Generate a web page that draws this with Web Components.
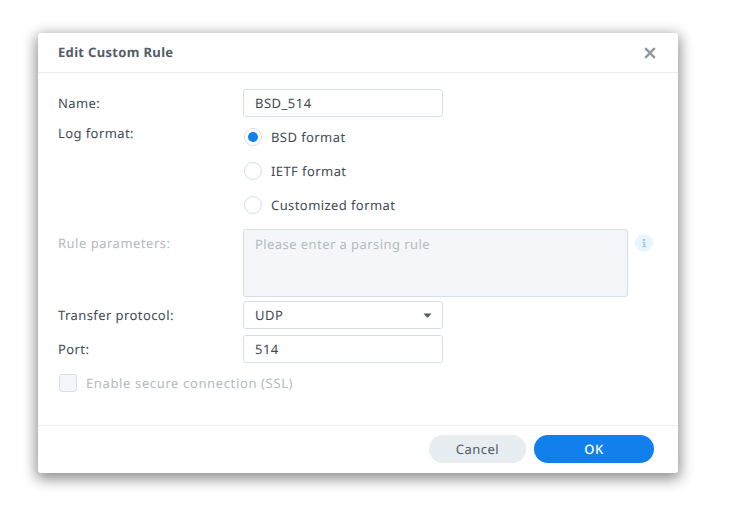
<!DOCTYPE html>
<html>
<head>
<meta charset="utf-8">
<title>Edit Custom Rule</title>
<style>
  html, body { margin: 0; background: #fff; }
  body { width: 748px; height: 531px; overflow: hidden; font-family: "Noto Sans", sans-serif; text-rendering: geometricPrecision; }
</style>
</head>
<body>
<rule-dialog heading="Edit Custom Rule">
  <form-row label="Name:"><text-box value="BSD_514"></text-box></form-row>
  <form-row label="Log format:" class="radios">
    <radio-group>
      <radio-option label="BSD format" checked></radio-option>
      <radio-option label="IETF format"></radio-option>
      <radio-option label="Customized format"></radio-option>
    </radio-group>
  </form-row>
  <form-row label="Rule parameters:" disabled class="area">
    <area-box placeholder="Please enter a parsing rule"></area-box>
  </form-row>
  <form-row label="Transfer protocol:"><select-box value="UDP"></select-box></form-row>
  <form-row label="Port:"><text-box value="514"></text-box></form-row>
  <check-row label="Enable secure connection (SSL)"></check-row>
</rule-dialog>

<script>
(function () {
  const FONT = '"Noto Sans", sans-serif';
  const SPACING = ".5px";

  class RuleDialog extends HTMLElement {
    constructor() {
      super();
      this.attachShadow({ mode: "open" });
      this.shadowRoot.innerHTML = `
        <style>
          :host { display: block; padding: 33px 70px 58px 38px; font-family: ${FONT}; }
          .dialog {
            width: 640px;
            height: 440px;
            background: #fff;
            border-radius: 3px;
            box-shadow: 0 4px 14px 2px rgba(0,0,0,.45);
            display: flex;
            flex-direction: column;
          }
          .head {
            box-sizing: border-box;
            height: 40px;
            flex: none;
            display: flex;
            align-items: center;
            justify-content: space-between;
            padding: 0 22px 0 20px;
            border-bottom: 1px solid #e8edf2;
          }
          .title { font-size: 13px; font-weight: 700; color: #535c66; letter-spacing: .33px; margin-top: -2px; }
          .close { display: block; width: 12px; height: 12px; }
          .body { flex: 1; padding: 16px 20px 0; display: flex; flex-direction: column; }
          .foot {
            box-sizing: border-box;
            height: 48px;
            flex: none;
            border-top: 1px solid #e8edf2;
            display: flex;
            justify-content: flex-end;
            align-items: flex-start;
            gap: 8px;
            padding: 9px 24px 0 0;
          }
          .btn {
            height: 28px;
            border-radius: 14px;
            display: flex;
            align-items: center;
            justify-content: center;
            font-size: 13px;
            letter-spacing: ${SPACING};
          }
          .cancel { width: 97px; background: #e8edf2; color: #4f5863; }
          .ok { width: 120px; background: #1180ec; color: #fff; font-weight: 500; }
        </style>
        <div class="dialog">
          <div class="head">
            <div class="title"></div>
            <svg class="close" viewBox="0 0 12 12"><path d="M1.2 1.2L10.8 10.8M10.8 1.2L1.2 10.8" stroke="#8f98a2" stroke-width="2.4" fill="none"/></svg>
          </div>
          <div class="body"><slot></slot></div>
          <div class="foot">
            <div class="btn cancel">Cancel</div>
            <div class="btn ok">OK</div>
          </div>
        </div>
      `;
    }
    connectedCallback() {
      this.shadowRoot.querySelector(".title").textContent = this.getAttribute("heading");
    }
  }

  class FormRow extends HTMLElement {
    constructor() {
      super();
      this.attachShadow({ mode: "open" });
      this.shadowRoot.innerHTML = `
        <style>
          :host { display: grid; grid-template-columns: 185px 1fr; margin-bottom: 6px; }
          :host(.radios) { margin-bottom: 15px; }
          :host(.area) { margin-bottom: 4px; }
          .label { font-size: 13px; letter-spacing: .42px; color: #414b55; line-height: 28px; }
          :host(.radios) .label { line-height: 20px; }
          :host([disabled]) .label { color: #b4bac0; letter-spacing: ${SPACING}; }
        </style>
        <div class="label"></div>
        <div><slot></slot></div>
      `;
    }
    connectedCallback() {
      this.shadowRoot.querySelector(".label").textContent = this.getAttribute("label");
    }
  }

  class TextBox extends HTMLElement {
    constructor() {
      super();
      this.attachShadow({ mode: "open" });
      this.shadowRoot.innerHTML = `
        <style>
          :host {
            display: block;
            box-sizing: border-box;
            width: 200px;
            height: 28px;
            border: 1px solid #d5dfea;
            border-radius: 3px;
            padding: 0 11px;
            font-size: 13px;
            letter-spacing: ${SPACING};
            line-height: 26px;
            color: #414b55;
          }
        </style>
        <span></span>
      `;
    }
    connectedCallback() {
      this.shadowRoot.querySelector("span").textContent = this.getAttribute("value");
    }
  }

  class SelectBox extends HTMLElement {
    constructor() {
      super();
      this.attachShadow({ mode: "open" });
      this.shadowRoot.innerHTML = `
        <style>
          :host {
            display: flex;
            box-sizing: border-box;
            width: 200px;
            height: 28px;
            border: 1px solid #d5dfea;
            border-radius: 3px;
            padding: 0 10px 0 11px;
            align-items: center;
            justify-content: space-between;
            font-size: 13px;
            letter-spacing: ${SPACING};
            color: #414b55;
          }
          svg { display: block; width: 9px; height: 5px; }
        </style>
        <span></span>
        <svg viewBox="0 0 9 5"><path d="M0.5 0.5H8.5L5 4.6H4Z" fill="#535c66"/></svg>
      `;
    }
    connectedCallback() {
      this.shadowRoot.querySelector("span").textContent = this.getAttribute("value");
    }
  }

  class AreaBox extends HTMLElement {
    constructor() {
      super();
      this.attachShadow({ mode: "open" });
      this.shadowRoot.innerHTML = `
        <style>
          :host { display: flex; gap: 7px; }
          .area {
            box-sizing: border-box;
            width: 385px;
            height: 68px;
            background: #f4f6fa;
            border: 1px solid #d5dfea;
            border-radius: 3px;
            padding: 4px 11px;
            font-size: 13px;
            letter-spacing: .43px;
            line-height: 20px;
            color: #b4bac0;
          }
          .info {
            width: 18px;
            height: 18px;
            margin-top: 5px;
            display: block;
          }
        </style>
        <div class="area"></div>
        <svg class="info" viewBox="0 0 18 18">
          <circle cx="9" cy="9" r="9" fill="#e9f4fe"/>
          <path d="M7.6 5h2.6v2h-2.6zM7.4 8h2.8v4.2h1v1H7.4v-1h1v-3.2h-1z" fill="#9ccdf8"/>
        </svg>
      `;
    }
    connectedCallback() {
      this.shadowRoot.querySelector(".area").textContent = this.getAttribute("placeholder");
    }
  }

  class RadioGroup extends HTMLElement {
    constructor() {
      super();
      this.attachShadow({ mode: "open" });
      this.shadowRoot.innerHTML = `
        <style>
          :host { display: flex; flex-direction: column; gap: 16px; padding-top: 5px; }
        </style>
        <slot></slot>
      `;
    }
  }

  class RadioOption extends HTMLElement {
    constructor() {
      super();
      this.attachShadow({ mode: "open" });
      this.shadowRoot.innerHTML = `
        <style>
          :host {
            display: flex;
            align-items: center;
            gap: 9px;
            height: 18px;
            padding-left: 1px;
            font-size: 13px;
            letter-spacing: .42px;
            color: #414b55;
          }
          .dot {
            box-sizing: border-box;
            width: 18px;
            height: 18px;
            border: 1px solid #d5dfea;
            border-radius: 50%;
            display: flex;
            align-items: center;
            justify-content: center;
          }
          :host([checked]) .dot::after {
            content: "";
            width: 10px;
            height: 10px;
            border-radius: 50%;
            background: #1180ec;
          }
        </style>
        <div class="dot"></div>
        <span></span>
      `;
    }
    connectedCallback() {
      this.shadowRoot.querySelector("span").textContent = this.getAttribute("label");
    }
  }

  class CheckRow extends HTMLElement {
    constructor() {
      super();
      this.attachShadow({ mode: "open" });
      this.shadowRoot.innerHTML = `
        <style>
          :host {
            display: flex;
            align-items: center;
            gap: 9px;
            height: 18px;
            margin-top: 5px;
            padding-left: 1px;
            font-size: 13px;
            letter-spacing: .63px;
            color: #b4bac0;
          }
          .box {
            box-sizing: border-box;
            width: 18px;
            height: 18px;
            background: #f4f6fa;
            border: 1px solid #d5dfea;
            border-radius: 3px;
          }
        </style>
        <div class="box"></div>
        <span></span>
      `;
    }
    connectedCallback() {
      this.shadowRoot.querySelector("span").textContent = this.getAttribute("label");
    }
  }

  customElements.define("rule-dialog", RuleDialog);
  customElements.define("form-row", FormRow);
  customElements.define("text-box", TextBox);
  customElements.define("select-box", SelectBox);
  customElements.define("area-box", AreaBox);
  customElements.define("radio-group", RadioGroup);
  customElements.define("radio-option", RadioOption);
  customElements.define("check-row", CheckRow);
})();
</script>
</body>
</html>
